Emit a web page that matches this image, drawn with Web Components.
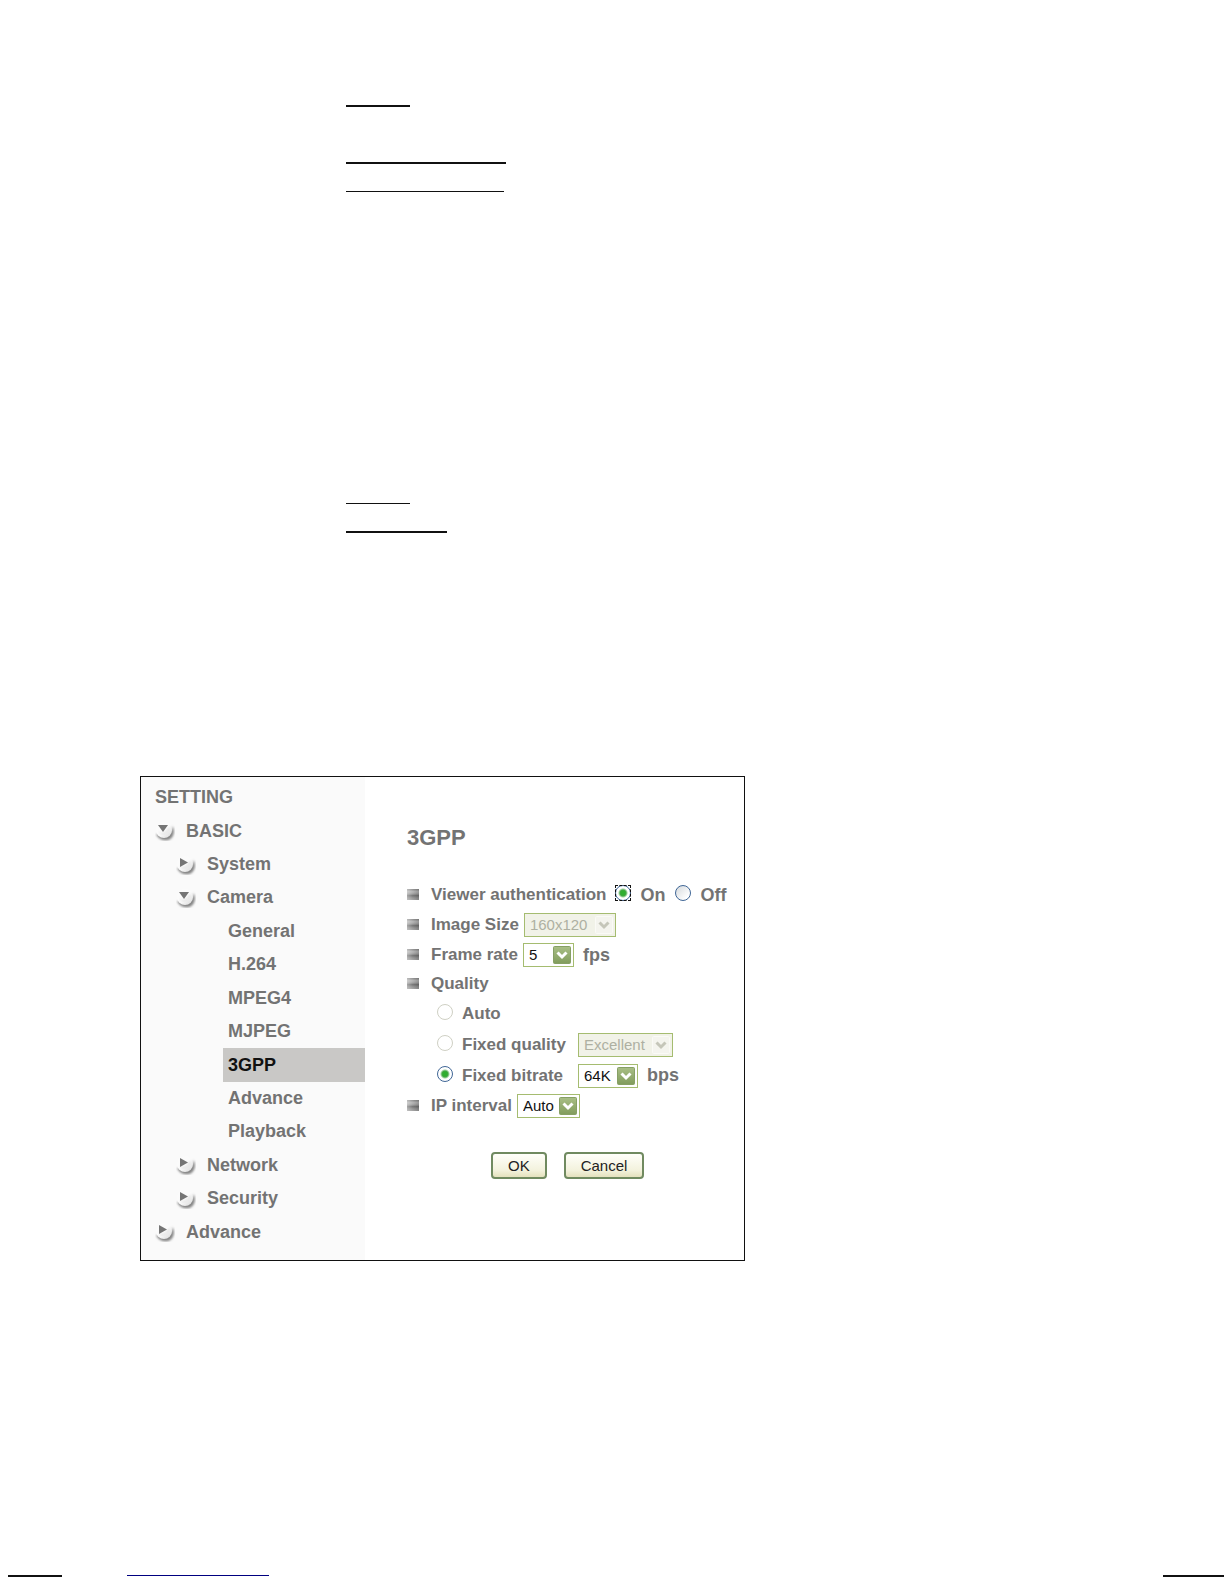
<!DOCTYPE html>
<html lang="en">
<head>
<meta charset="utf-8">
<title>3GPP Setting</title>
<style>
    body {
        margin: 0;
        min-height: 100vh;
        display: flex;
        flex-direction: column;
        background: #fff;
        color: #737373;
        font-family: "Liberation Sans", Arial, sans-serif;
    }
    .rules {
        display: grid;
        justify-items: start;
        padding-left: 346px;
    }
    .intro {
        padding-top: 105px;
    }
    .detail {
        padding-top: 311px;
        padding-bottom: 243px;
        gap: 27px;
    }
    .group {
        display: grid;
        gap: 27px;
        padding-top: 55px;
    }
    footer {
        display: flex;
        align-items: flex-start;
        margin-top: auto;
        padding: 32px 0 7px 8px;
    }
    footer .contact {
        margin-left: 65px;
    }
    footer .page {
        margin-left: auto;
    }
</style>
</head>
<body>
    <section class="rules intro">
        <text-rule length="64" weight="2"></text-rule>
        <div class="group">
            <text-rule length="160" weight="2"></text-rule>
            <text-rule length="158" weight="1"></text-rule>
        </div>
    </section>
    <section class="rules detail">
        <text-rule length="64" weight="1"></text-rule>
        <text-rule length="101" weight="2"></text-rule>
    </section>

    <setting-panel>
        <nav-tree slot="nav">
            <nav-item>SETTING</nav-item>
            <nav-item icon="open">BASIC</nav-item>
            <nav-item icon="closed" level="1">System</nav-item>
            <nav-item icon="open" level="1">Camera</nav-item>
            <nav-item level="2">General</nav-item>
            <nav-item level="2">H.264</nav-item>
            <nav-item level="2">MPEG4</nav-item>
            <nav-item level="2">MJPEG</nav-item>
            <nav-item level="2" active>3GPP</nav-item>
            <nav-item level="2">Advance</nav-item>
            <nav-item level="2">Playback</nav-item>
            <nav-item icon="closed" level="1">Network</nav-item>
            <nav-item icon="closed" level="1">Security</nav-item>
            <nav-item icon="closed">Advance</nav-item>
        </nav-tree>
        <stream-form></stream-form>
    </setting-panel>

    <footer>
        <text-rule length="54" weight="2"></text-rule>
        <text-rule class="contact" length="142" weight="1" color="#000080"></text-rule>
        <text-rule class="page" length="61" weight="2"></text-rule>
    </footer>

<script>
    class TextRule extends HTMLElement {
        connectedCallback() {
            const length = this.getAttribute('length');
            const weight = this.getAttribute('weight');
            const color = this.getAttribute('color') || '#111';

            this.attachShadow({ mode: 'open' });
            this.shadowRoot.innerHTML = `
                <style>
                    :host {
                        display: block;
                        width: ${length}px;
                    }
                    hr {
                        margin: 0;
                        border: 0;
                        border-top: ${weight}px solid ${color};
                    }
                </style>
                <hr>
            `;
        }
    }

    class SettingPanel extends HTMLElement {
        connectedCallback() {
            this.attachShadow({ mode: 'open' });
            this.shadowRoot.innerHTML = `
                <style>
                    :host {
                        display: grid;
                        grid-template-columns: 224px 1fr;
                        box-sizing: border-box;
                        max-width: 605px;
                        margin-left: 140px;
                        border: 1px solid #111;
                    }
                </style>
                <slot name="nav"></slot>
                <slot></slot>
            `;
        }
    }

    class NavTree extends HTMLElement {
        connectedCallback() {
            this.attachShadow({ mode: 'open' });
            this.shadowRoot.innerHTML = `
                <style>
                    :host {
                        display: block;
                        background: #fafafa;
                    }
                    nav {
                        display: grid;
                        grid-auto-rows: 1fr;
                        box-sizing: border-box;
                        height: 100%;
                        padding: 4px 0 11px;
                    }
                </style>
                <nav aria-label="Setting"><slot></slot></nav>
            `;
        }
    }

    class NavItem extends HTMLElement {
        connectedCallback() {
            const icon = this.getAttribute('icon');
            const arrow = icon === 'open' ? 'M3 4h10l-5 7z' : 'M4 3v9l8-4.500z';

            this.attachShadow({ mode: 'open' });
            this.shadowRoot.innerHTML = `
                <style>
                    :host {
                        display: grid;
                        padding-left: 14px;
                    }
                    :host([level="1"]) {
                        padding-left: 35px;
                    }
                    :host([level="2"]) {
                        margin-left: 82px;
                        padding-left: 5px;
                    }
                    :host([active]) {
                        background: #c9c8c6;
                    }
                    a {
                        display: flex;
                        align-items: center;
                        gap: 11px;
                        color: #737373;
                        font-size: 18px;
                        font-weight: bold;
                        line-height: 33px;
                        text-decoration: none;
                    }
                    :host([active]) a {
                        color: #111;
                    }
                </style>
                <a href="#">
                    ${icon ? `
                    <svg width="20" height="20" viewBox="0 0 20 20" aria-hidden="true">
                        <defs>
                            <linearGradient id="ball" x1="0" y1="0" x2="1" y2="1">
                                <stop offset="0.5" stop-color="#fbfbfb"/>
                                <stop offset="0.85" stop-color="#e2e2e2"/>
                                <stop offset="1" stop-color="#c0c0c0"/>
                            </linearGradient>
                            <filter id="soft"><feGaussianBlur stdDeviation="0.8"/></filter>
                        </defs>
                        <path d="M1 13C4 20 13 21 16.500 17C20 13 19 8 17.500 5C17 12 12 15 1 13z" fill="#858585" filter="url(#soft)"/>
                        <circle cx="9" cy="9" r="8" fill="url(#ball)"/>
                        <path d="M4 11c3 3 8 2 10-4" fill="none" stroke="#d9d9d9" stroke-width="1" filter="url(#soft)"/>
                        <path d="${arrow}" fill="#757575"/>
                    </svg>` : ''}
                    <span><slot></slot></span>
                </a>
            `;
        }
    }

    class SettingRow extends HTMLElement {
        connectedCallback() {
            this.attachShadow({ mode: 'open' });
            this.shadowRoot.innerHTML = `
                <style>
                    :host {
                        display: flex;
                        align-items: center;
                        height: 30px;
                    }
                    :host([heading]) {
                        height: 28px;
                    }
                    :host([sub]) {
                        height: 31px;
                        padding-left: 30px;
                    }
                    i {
                        width: 12px;
                        height: 11px;
                        margin: 0 12px 1px 0;
                        background: linear-gradient(100deg, #fff6, #0000 50%, #0003), linear-gradient(#888, #b5b5b5 25%, #a0a0a0 45%, #777 60%, #999 80%, #aaa);
                    }
                    :host([sub]) i {
                        display: none;
                    }
                </style>
                <i></i>
                <slot></slot>
            `;
        }
    }

    // frame and arrow around a slotted <select>
    class DropDown extends HTMLElement {
        connectedCallback() {
            this.attachShadow({ mode: 'open' });
            this.shadowRoot.innerHTML = `
                <style>
                    :host {
                        display: grid;
                        box-sizing: border-box;
                        height: 24px;
                        border: 1px solid #a5bc70;
                        background: #fff;
                    }
                    :host([disabled]) {
                        background: #f1f2e8;
                    }
                    ::slotted(select) {
                        grid-area: 1 / 1;
                        appearance: none;
                        width: 100%;
                        margin: 0;
                        padding: 0 0 0 5px;
                        border: 0;
                        background: transparent;
                        color: #111;
                        font: 15px/22px "Liberation Sans", Arial, sans-serif;
                        opacity: 1;
                    }
                    :host([disabled]) ::slotted(select) {
                        color: #aeb0a2;
                    }
                    svg {
                        grid-area: 1 / 1;
                        place-self: center end;
                        margin-right: 1px;
                        pointer-events: none;
                    }
                    .face { fill: url(#face); stroke: #87a065; }
                    .tick { fill: none; stroke: #fff; stroke-width: 3; }
                    :host([disabled]) .face { fill: #f4f4ee; stroke: #fafaf6; }
                    :host([disabled]) .tick { stroke: #c5c6b9; }
                </style>
                <slot></slot>
                <svg width="20" height="20" viewBox="0 0 20 20" aria-hidden="true">
                    <defs>
                        <linearGradient id="face" x1="0" y1="0" x2="0" y2="1">
                            <stop offset="0" stop-color="#a9bf86"/>
                            <stop offset="1" stop-color="#819c5c"/>
                        </linearGradient>
                    </defs>
                    <rect class="face" x="1.5" y="1.5" width="17" height="17" rx="1"/>
                    <path class="tick" d="M5.5 7.5l4.500 4.500 4.500-4.500"/>
                </svg>
            `;
        }
    }

    class StreamForm extends HTMLElement {
        connectedCallback() {
            this.attachShadow({ mode: 'open' });
            this.shadowRoot.innerHTML = `
                <style>
                    :host {
                        display: block;
                        padding: 48px 0 81px 42px;
                        background: #fff;
                    }
                    h1 {
                        margin: 0 0 29px;
                        font-size: 22px;
                        line-height: 26px;
                    }
                    label, .name {
                        font-size: 17px;
                        font-weight: bold;
                        line-height: 22px;
                    }
                    .name {
                        margin-right: 5px;
                    }
                    .unit {
                        margin-left: 9px;
                        font-size: 18px;
                        font-weight: bold;
                    }
                    .option {
                        width: 116px;
                    }
                    .switch {
                        margin-right: 10px;
                        font-size: 18px;
                    }
                    input {
                        appearance: none;
                        box-sizing: border-box;
                        flex: none;
                        width: 16px;
                        height: 16px;
                        margin: 0 9px 4px 0;
                        border: 1px solid #3f6696;
                        border-radius: 50%;
                        background: linear-gradient(135deg, #d5d9dc, #fff 80%);
                    }
                    input:checked {
                        background: radial-gradient(circle, #2fae2f 0 2px, #43a843 3px, #fff 5px);
                    }
                    input:disabled {
                        border-color: #cfd0c4;
                        background: #fff;
                    }
                    /* square focus ring around the round control */
                    .focus {
                        display: grid;
                        margin: 0 9px 4px 4px;
                        outline: 1px dashed #111;
                        outline-offset: -1px;
                    }
                    .focus input {
                        margin: 0;
                    }
                    .size { width: 92px; }
                    .rate { width: 51px; }
                    .quality { width: 95px; }
                    .bitrate { width: 60px; }
                    .interval { width: 63px; }
                    .actions {
                        display: flex;
                        gap: 17px;
                        padding: 31px 0 0 84px;
                    }
                    button {
                        box-sizing: border-box;
                        height: 27px;
                        padding: 0 15px;
                        border: 2px solid #708a60;
                        border-radius: 4px;
                        background: linear-gradient(#fffffa, #f3f2dd 70%, #e4e1bd);
                        color: #222;
                        font: 15px/20px "Liberation Sans", Arial, sans-serif;
                    }
                </style>
                <form>
                    <h1>3GPP</h1>
                    <setting-row>
                        <span class="name">Viewer authentication</span>
                        <span class="focus"><input type="radio" name="auth" id="on" checked></span>
                        <label class="switch" for="on">On</label>
                        <input type="radio" name="auth" id="off">
                        <label class="switch" for="off">Off</label>
                    </setting-row>
                    <setting-row>
                        <label class="name" for="size">Image Size</label>
                        <drop-down class="size" disabled>
                            <select id="size" disabled><option>160x120</option></select>
                        </drop-down>
                    </setting-row>
                    <setting-row>
                        <label class="name" for="rate">Frame rate</label>
                        <drop-down class="rate">
                            <select id="rate"><option>5</option></select>
                        </drop-down>
                        <span class="unit">fps</span>
                    </setting-row>
                    <setting-row heading>
                        <span class="name">Quality</span>
                    </setting-row>
                    <setting-row sub>
                        <input type="radio" name="quality" id="auto" disabled>
                        <label class="option" for="auto">Auto</label>
                    </setting-row>
                    <setting-row sub>
                        <input type="radio" name="quality" id="fixed-quality" disabled>
                        <label class="option" for="fixed-quality">Fixed quality</label>
                        <drop-down class="quality" disabled>
                            <select aria-label="Fixed quality" disabled><option>Excellent</option></select>
                        </drop-down>
                    </setting-row>
                    <setting-row sub>
                        <input type="radio" name="quality" id="fixed-bitrate" checked>
                        <label class="option" for="fixed-bitrate">Fixed bitrate</label>
                        <drop-down class="bitrate">
                            <select aria-label="Fixed bitrate"><option>64K</option></select>
                        </drop-down>
                        <span class="unit">bps</span>
                    </setting-row>
                    <setting-row>
                        <label class="name" for="interval">IP interval</label>
                        <drop-down class="interval">
                            <select id="interval"><option>Auto</option></select>
                        </drop-down>
                    </setting-row>
                    <div class="actions">
                        <button type="button">OK</button>
                        <button type="button">Cancel</button>
                    </div>
                </form>
            `;
        }
    }

    customElements.define('text-rule', TextRule);
    customElements.define('setting-panel', SettingPanel);
    customElements.define('nav-tree', NavTree);
    customElements.define('nav-item', NavItem);
    customElements.define('setting-row', SettingRow);
    customElements.define('drop-down', DropDown);
    customElements.define('stream-form', StreamForm);
</script>
</body>
</html>
